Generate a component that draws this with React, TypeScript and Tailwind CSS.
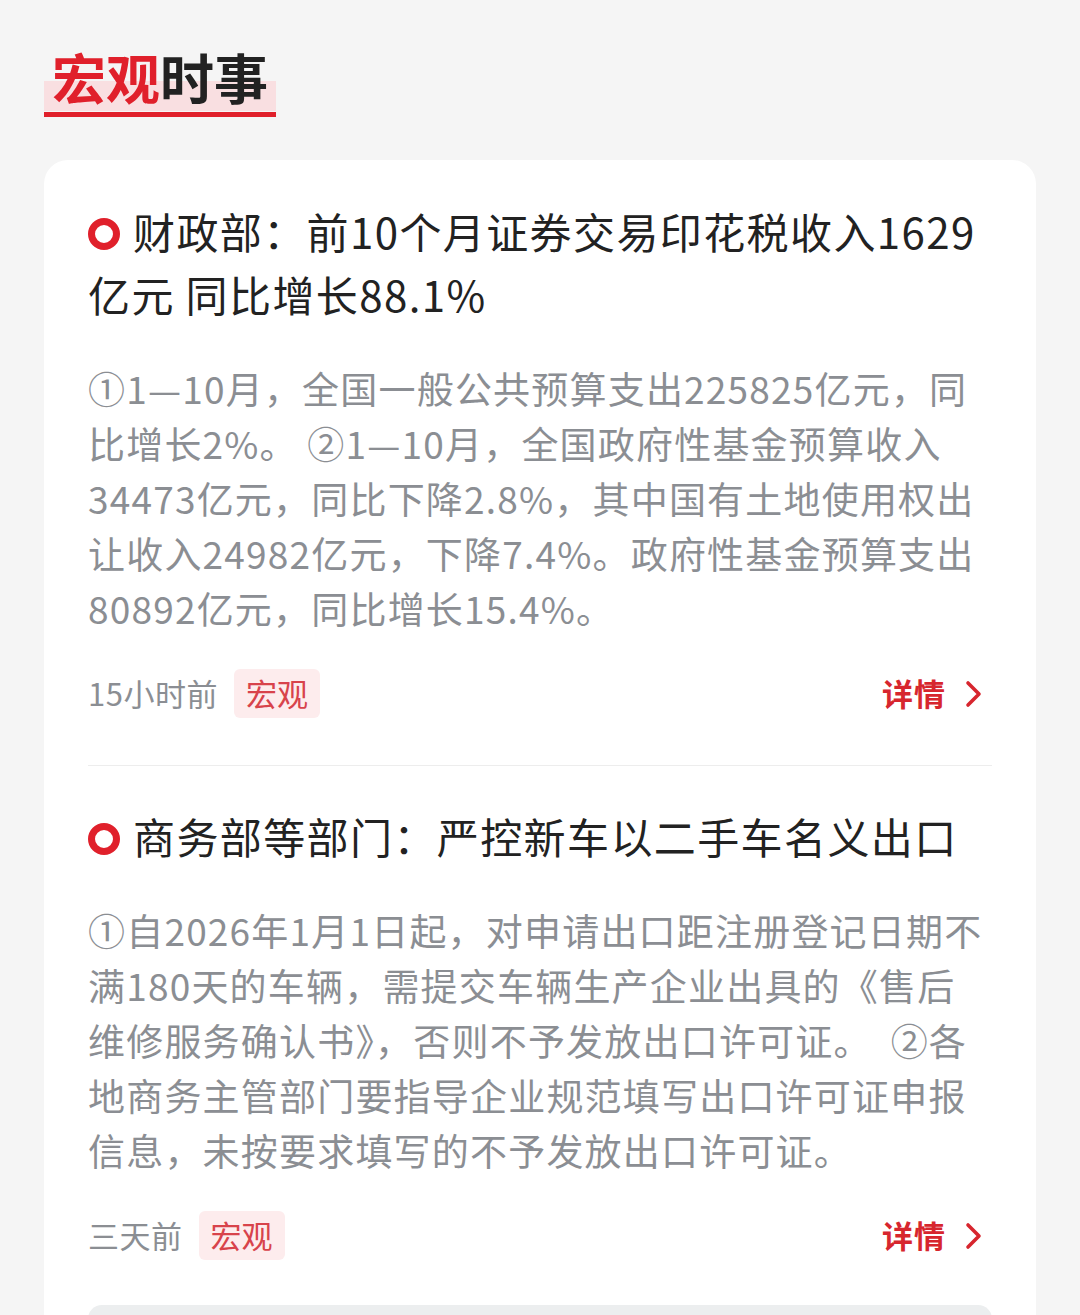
import React from "react";

const font = { fontFamily: '"Noto Sans CJK SC", "Noto Sans", sans-serif' };

function Ring() {
  return (
    <span className="inline-block align-middle mr-[13px] relative -top-[4px] w-[32px] h-[32px] rounded-full border-[7px] border-[#e0202b]" />
  );
}

function Chevron() {
  return (
    <svg width="20" height="30" viewBox="0 0 20 30" className="ml-[18px]">
      <path d="M4 4 L15 15 L4 26" fill="none" stroke="#d7262e" strokeWidth="3.6" strokeLinecap="round" strokeLinejoin="round" />
    </svg>
  );
}

type Item = { title: string; lines: string[]; time: string };

const items: Item[] = [
  {
    title: "财政部：前10个月证券交易印花税收入1629亿元 同比增长88.1%",
    lines: [
      "①1—10月，全国一般公共预算支出225825亿元，同",
      "比增长2%。 ②1—10月，全国政府性基金预算收入",
      "34473亿元，同比下降2.8%，其中国有土地使用权出",
      "让收入24982亿元，下降7.4%。政府性基金预算支出",
      "80892亿元，同比增长15.4%。",
    ],
    time: "15小时前",
  },
  {
    title: "商务部等部门：严控新车以二手车名义出口",
    lines: [
      "①自2026年1月1日起，对申请出口距注册登记日期不",
      "满180天的车辆，需提交车辆生产企业出具的《售后",
      "维修服务确认书》，否则不予发放出口许可证。  ②各",
      "地商务主管部门要指导企业规范填写出口许可证申报",
      "信息，未按要求填写的不予发放出口许可证。",
    ],
    time: "三天前",
  },
];

function NewsItem({ item, last }: { item: Item; last?: boolean }) {
  return (
    <div className={last ? "pt-[38px]" : "pt-[39px] pb-[47px] border-b border-[#ededed]"}>
      <div className="text-[42px] leading-[63px] text-[#222222] tracking-[1.4px]">
        <Ring />
        {item.title}
      </div>
      <div className="mt-[36px] text-[37px] leading-[55px] text-[#8b8e93] tracking-[1.2px]">
        {item.lines.map((l, i) => (
          <div key={i} className="whitespace-pre">{l}</div>
        ))}
      </div>
      <div className="mt-[33px] flex items-center justify-between h-[49px]">
        <div className="flex items-center">
          <span className="text-[31px] text-[#8b8e93] tracking-[0.5px]">{item.time}</span>
          <span className="ml-[16px] h-[49px] px-[12px] rounded-[6px] bg-[#fdeced] text-[31px] text-[#d8434b] flex items-center">宏观</span>
        </div>
        <div className="flex items-center mr-[8px]">
          <span className="text-[31px] font-bold text-[#d7262e] tracking-[1px]">详情</span>
          <Chevron />
        </div>
      </div>
    </div>
  );
}

export default function App() {
  return (
    <div style={font} className="w-[1080px] h-[1315px] overflow-hidden bg-[#f5f5f5]">
      <div className="pt-[42px] pl-[44px]">
        <div className="inline-block relative">
          <div className="absolute left-0 right-0 top-[39px] h-[30px] bg-[#f9dfe1]" />
          <div className="relative px-[8px] text-[54px] leading-[70px] font-bold">
            <span className="text-[#e0202b]">宏观</span>
            <span className="text-[#222222]">时事</span>
          </div>
          <div className="relative h-[5px] bg-[#e0202b]" />
        </div>
      </div>
      <div className="mt-[43px] mx-[44px] bg-white rounded-[24px] px-[44px]">
        <NewsItem item={items[0]} />
        <NewsItem item={items[1]} last />
        <div className="mt-[45px] h-[40px] rounded-[14px] bg-[#eceeef]" />
      </div>
    </div>
  );
}
